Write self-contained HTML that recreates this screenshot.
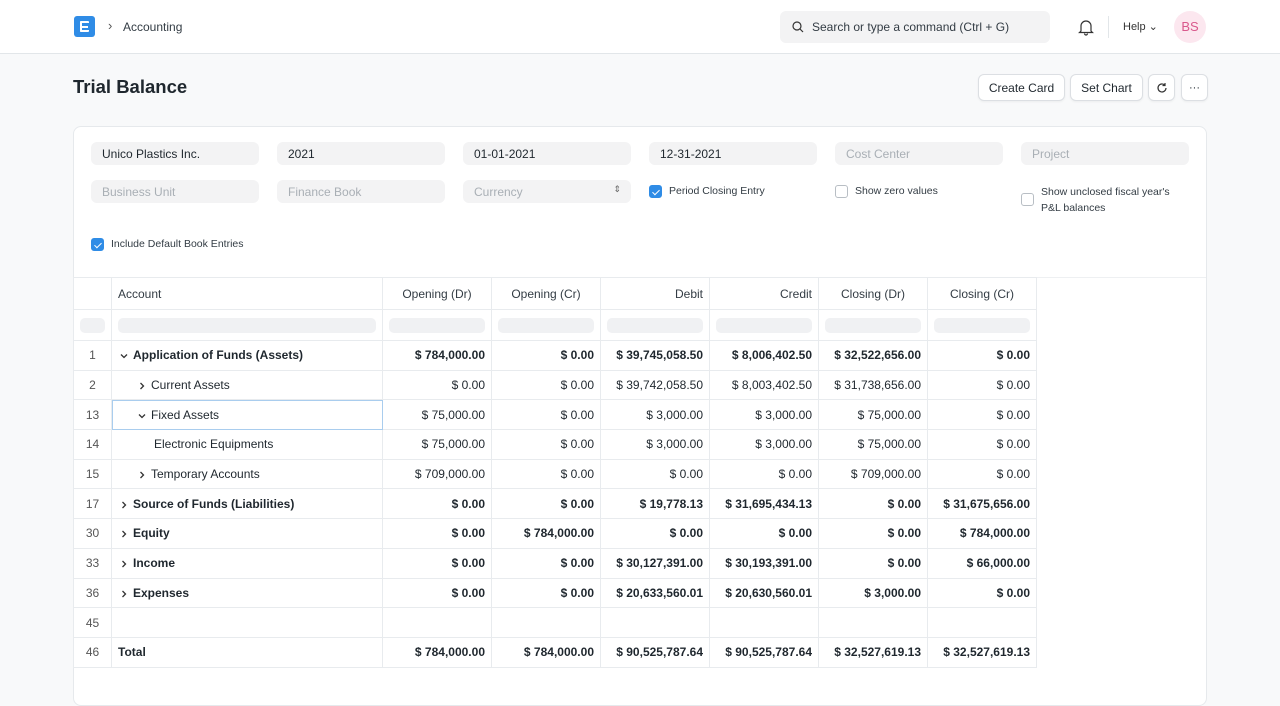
<!DOCTYPE html>
<html><head><meta charset="utf-8"><style>
*{box-sizing:border-box;margin:0;padding:0}
body{width:1280px;height:689px;overflow:hidden;background:#f8f9fa;font-family:"Liberation Sans",sans-serif;color:#1f272e;position:relative}
.nav{position:absolute;left:0;top:0;width:1280px;height:54px;background:#fff;border-bottom:1px solid #e2e6e9}
.abs{position:absolute}
.btn{position:absolute;top:74px;height:27px;background:#fff;border:1px solid #dcdfe3;border-radius:6px;font-size:12px;display:flex;align-items:center;justify-content:center;box-shadow:0 1px 2px rgba(0,0,0,.05)}
.card{position:absolute;left:73px;top:126px;width:1134px;height:580px;background:#fff;border:1px solid #e6e9ec;border-radius:8px}
.f{position:absolute;width:168px;height:23px;background:#f3f3f4;border-radius:6px;font-size:12px;padding:5px 11px;color:#1f272e}
.f.p{color:#a9afb5}
.cb{position:absolute;font-size:10.5px;color:#333c44;display:flex;align-items:flex-start}
.box{width:13px;height:13px;border:1px solid #b8bec4;border-radius:3px;margin-right:7px;flex:none;background:#fff}
.box.on{background:#2f8ce6;border-color:#2f8ce6;position:relative}
.box.on:after{content:"";position:absolute;left:3.5px;top:1.5px;width:3px;height:6px;border:solid #fff;border-width:0 1.5px 1.5px 0;transform:rotate(45deg)}
table{position:absolute;left:73px;top:277px;border-collapse:collapse;font-size:12px;table-layout:fixed}
td{border:1px solid #e8ebee;height:29.7px;padding:0 6px;text-align:right;white-space:nowrap;overflow:hidden}
td:first-child{text-align:center;color:#555;background:#fff}
td:nth-child(2){text-align:left}
tr.h td{height:32px;color:#333c44}
tr.h td:nth-child(n+3){text-align:center}
tr.fl td{height:31px;padding:0 6px}
.pill{height:15px;background:#f0f1f3;border-radius:5px}
tr.b td{font-weight:bold}
tr.b td:first-child{font-weight:normal}
.ch{display:inline-block;width:12px;vertical-align:middle;margin-right:3px}
</style></head><body>
<div class="nav">
<div class="abs" style="left:74px;top:16px;width:21px;height:21px;background:#2f8ce6;border-radius:3px"><div class="abs" style="left:6px;top:5px;width:9px;height:11px;border:2.5px solid #fff;border-right:none;border-radius:1px"></div><div class="abs" style="left:6px;top:9.5px;width:8px;height:2px;background:#fff"></div></div>
<div class="abs" style="left:108px;top:18px;font-size:13px;color:#555">›</div>
<div class="abs" style="left:123px;top:20px;font-size:12px;color:#333c44">Accounting</div>
<div class="abs" style="left:780px;top:11px;width:270px;height:32px;background:#f3f3f4;border-radius:6px;font-size:12px;color:#333c44;padding:9px 0 0 32px">Search or type a command (Ctrl + G)
<svg class="abs" style="left:12px;top:10px" width="12" height="12" viewBox="0 0 12 12"><circle cx="5" cy="5" r="4" stroke="#333" fill="none" stroke-width="1.2"/><path d="M8 8l3 3" stroke="#333" stroke-width="1.2"/></svg></div>
<svg class="abs" style="left:1078px;top:18px" width="16" height="18" viewBox="0 0 16 18"><path d="M3 13V8a5 5 0 0110 0v5l1.5 1.5h-13z M6.5 15.5a1.5 1.5 0 003 0" stroke="#333" fill="none" stroke-width="1.2"/></svg>
<div class="abs" style="left:1108px;top:16px;width:1px;height:22px;background:#e2e6e9"></div>
<div class="abs" style="left:1123px;top:20px;font-size:11px;color:#333">Help ⌄</div>
<div class="abs" style="left:1174px;top:11px;width:32px;height:32px;border-radius:50%;background:#fce7ef;color:#d9588c;font-size:13px;text-align:center;line-height:32px">BS</div>
</div>
<div class="abs" style="left:73px;top:76px;font-size:18.5px;font-weight:bold">Trial Balance</div>
<div class="btn" style="left:978px;width:87px">Create Card</div>
<div class="btn" style="left:1070px;width:73px">Set Chart</div>
<div class="btn" style="left:1148px;width:27px"><svg width="12" height="12" viewBox="0 0 12 12"><path d="M10 6a4 4 0 11-1.2-2.9M9 1v2.5H6.5" stroke="#333" fill="none" stroke-width="1.2"/></svg></div>
<div class="btn" style="left:1181px;width:27px;font-size:11px">···</div>
<div class="card">
<div style="position:absolute;left:0;top:150px;width:1132px;border-top:1px solid #eef0f2"></div>
</div>
<div class="f" style="left:91px;top:142px">Unico Plastics Inc.</div>
<div class="f" style="left:277px;top:142px">2021</div>
<div class="f" style="left:463px;top:142px">01-01-2021</div>
<div class="f" style="left:649px;top:142px">12-31-2021</div>
<div class="f p" style="left:835px;top:142px">Cost Center</div>
<div class="f p" style="left:1021px;top:142px">Project</div>
<div class="f p" style="left:91px;top:180px">Business Unit</div>
<div class="f p" style="left:277px;top:180px">Finance Book</div>
<div class="f p" style="left:463px;top:180px">Currency<span style="position:absolute;right:10px;top:4px;font-size:9px;color:#666">⇕</span></div>
<div class="cb" style="left:649px;top:185px"><span class="box on"></span>Period Closing Entry</div>
<div class="cb" style="left:835px;top:185px"><span class="box"></span>Show zero values</div>
<div class="cb" style="left:1021px;top:184px;line-height:16px"><span class="box" style="margin-top:9px"></span>Show unclosed fiscal year's<br>P&amp;L balances</div>
<div class="cb" style="left:91px;top:238px"><span class="box on"></span>Include Default Book Entries</div>
<table>
<colgroup><col style="width:38px"><col style="width:271px"><col style="width:109px"><col style="width:109px"><col style="width:109px"><col style="width:109px"><col style="width:109px"><col style="width:109px"></colgroup>
<tr class="h"><td></td><td>Account</td><td>Opening (Dr)</td><td>Opening (Cr)</td><td style="text-align:right">Debit</td><td style="text-align:right">Credit</td><td>Closing (Dr)</td><td>Closing (Cr)</td></tr>
<tr class="fl"><td><div class="pill"></div></td><td><div class="pill"></div></td><td><div class="pill"></div></td><td><div class="pill"></div></td><td><div class="pill"></div></td><td><div class="pill"></div></td><td><div class="pill"></div></td><td><div class="pill"></div></td></tr>
<tr class="b"><td>1</td><td><svg class="ch" viewBox="0 0 12 12" height="12"><path d="M3 4.5l3 3 3-3" stroke="#333" fill="none" stroke-width="1.3"/></svg>Application of Funds (Assets)</td><td>$ 784,000.00</td><td>$ 0.00</td><td>$ 39,745,058.50</td><td>$ 8,006,402.50</td><td>$ 32,522,656.00</td><td>$ 0.00</td></tr>
<tr><td>2</td><td style="padding-left:24px"><svg class="ch" viewBox="0 0 12 12" height="12"><path d="M4.5 3l3 3-3 3" stroke="#333" fill="none" stroke-width="1.3"/></svg>Current Assets</td><td>$ 0.00</td><td>$ 0.00</td><td>$ 39,742,058.50</td><td>$ 8,003,402.50</td><td>$ 31,738,656.00</td><td>$ 0.00</td></tr>
<tr><td>13</td><td style="padding-left:24px;outline:1px solid #a9cdee;outline-offset:-1px"><svg class="ch" viewBox="0 0 12 12" height="12"><path d="M3 4.5l3 3 3-3" stroke="#333" fill="none" stroke-width="1.3"/></svg>Fixed Assets</td><td>$ 75,000.00</td><td>$ 0.00</td><td>$ 3,000.00</td><td>$ 3,000.00</td><td>$ 75,000.00</td><td>$ 0.00</td></tr>
<tr><td>14</td><td style="padding-left:42px">Electronic Equipments</td><td>$ 75,000.00</td><td>$ 0.00</td><td>$ 3,000.00</td><td>$ 3,000.00</td><td>$ 75,000.00</td><td>$ 0.00</td></tr>
<tr><td>15</td><td style="padding-left:24px"><svg class="ch" viewBox="0 0 12 12" height="12"><path d="M4.5 3l3 3-3 3" stroke="#333" fill="none" stroke-width="1.3"/></svg>Temporary Accounts</td><td>$ 709,000.00</td><td>$ 0.00</td><td>$ 0.00</td><td>$ 0.00</td><td>$ 709,000.00</td><td>$ 0.00</td></tr>
<tr class="b"><td>17</td><td><svg class="ch" viewBox="0 0 12 12" height="12"><path d="M4.5 3l3 3-3 3" stroke="#333" fill="none" stroke-width="1.3"/></svg>Source of Funds (Liabilities)</td><td>$ 0.00</td><td>$ 0.00</td><td>$ 19,778.13</td><td>$ 31,695,434.13</td><td>$ 0.00</td><td>$ 31,675,656.00</td></tr>
<tr class="b"><td>30</td><td><svg class="ch" viewBox="0 0 12 12" height="12"><path d="M4.5 3l3 3-3 3" stroke="#333" fill="none" stroke-width="1.3"/></svg>Equity</td><td>$ 0.00</td><td>$ 784,000.00</td><td>$ 0.00</td><td>$ 0.00</td><td>$ 0.00</td><td>$ 784,000.00</td></tr>
<tr class="b"><td>33</td><td><svg class="ch" viewBox="0 0 12 12" height="12"><path d="M4.5 3l3 3-3 3" stroke="#333" fill="none" stroke-width="1.3"/></svg>Income</td><td>$ 0.00</td><td>$ 0.00</td><td>$ 30,127,391.00</td><td>$ 30,193,391.00</td><td>$ 0.00</td><td>$ 66,000.00</td></tr>
<tr class="b"><td>36</td><td><svg class="ch" viewBox="0 0 12 12" height="12"><path d="M4.5 3l3 3-3 3" stroke="#333" fill="none" stroke-width="1.3"/></svg>Expenses</td><td>$ 0.00</td><td>$ 0.00</td><td>$ 20,633,560.01</td><td>$ 20,630,560.01</td><td>$ 3,000.00</td><td>$ 0.00</td></tr>
<tr><td>45</td><td></td><td></td><td></td><td></td><td></td><td></td><td></td></tr>
<tr class="b"><td>46</td><td>Total</td><td>$ 784,000.00</td><td>$ 784,000.00</td><td>$ 90,525,787.64</td><td>$ 90,525,787.64</td><td>$ 32,527,619.13</td><td>$ 32,527,619.13</td></tr>
</table>
</body></html>
